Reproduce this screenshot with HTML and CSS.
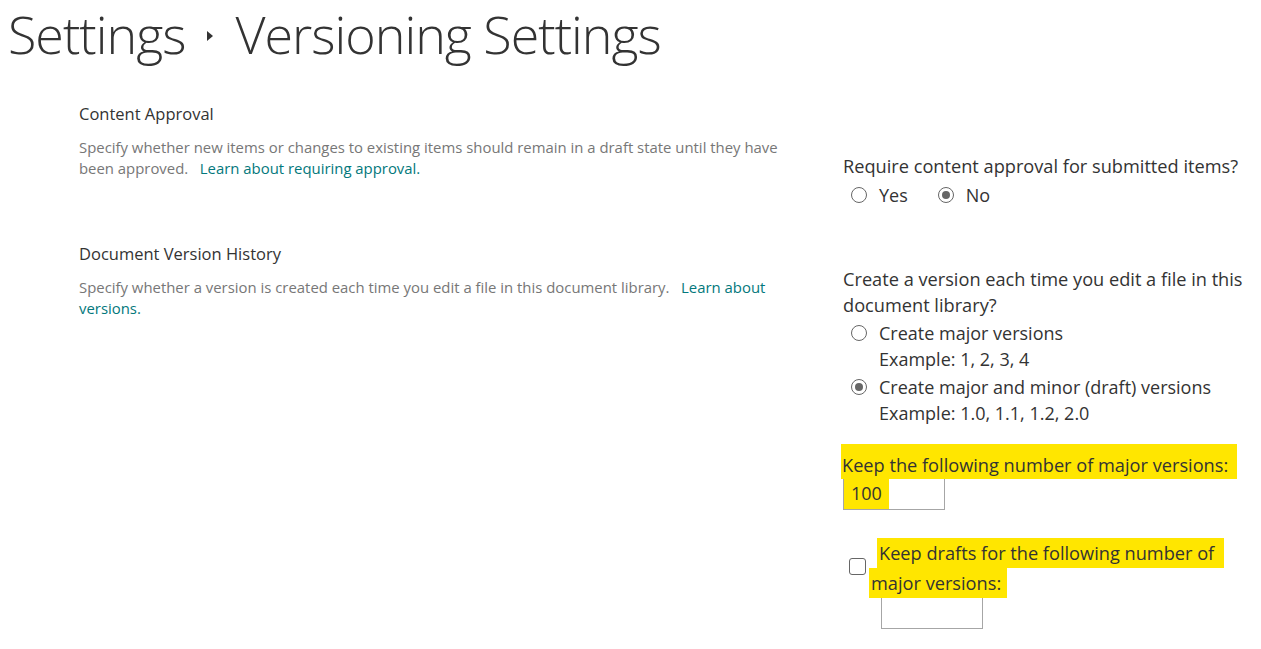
FILE: index.html
```html
<!DOCTYPE html>
<html lang="en">
<head>
  <meta charset="UTF-8" />
  <title>Versioning Settings</title>
  <link rel="stylesheet" href="styles.css">
</head>
<body>

  <!-- Page title -->
  <h1 class="page-title">
    <span>Settings</span>
    <span class="crumb-arrow"></span>
    <span>Versioning Settings</span>
  </h1>

  <!-- Content approval -->
  <section class="setting-row row-approval">
    <div class="setting-info">
      <h2>Content Approval</h2>
      <p>Specify whether new items or changes to existing items should remain in a draft state until they have been approved.&nbsp;&nbsp; <a href="#">Learn about requiring approval.</a></p>
    </div>
    <div class="setting-control">
      <div class="question">Require content approval for submitted items?</div>
      <div class="radio-inline">
        <label><input type="radio" name="approval"> Yes</label>
        <label><input type="radio" name="approval" checked> No</label>
      </div>
    </div>
  </section>

  <!-- Version history -->
  <section class="setting-row row-history">
    <div class="setting-info">
      <h2>Document Version History</h2>
      <p>Specify whether a version is created each time you edit a file in this document library.&nbsp;&nbsp; <a href="#">Learn about versions.</a></p>
    </div>
    <div class="setting-control">
      <div class="question">Create a version each time you edit a file in this document library?</div>
      <label class="radio-option">
        <input type="radio" name="versions">
        <span>Create major versions<br>Example: 1, 2, 3, 4</span>
      </label>
      <label class="radio-option">
        <input type="radio" name="versions" checked>
        <span>Create major and minor (draft) versions<br>Example: 1.0, 1.1, 1.2, 2.0</span>
      </label>

      <div class="limit-block">
        <div class="mark mark-major">Keep the following number of major versions:</div>
        <div class="num-box"><span class="mark">100</span></div>
      </div>

      <div class="drafts-block">
        <input type="checkbox" class="check">
        <div>
          <div class="mark mark-drafts">Keep drafts for the following number of</div>
          <div class="mark mark-drafts2">major versions:</div>
          <div class="num-box empty"></div>
        </div>
      </div>
    </div>
  </section>

</body>
</html>
```

FILE: styles.css
```css
* {
  margin: 0;
  padding: 0;
  box-sizing: border-box;
}

body {
  font-family: 'Open Sans', 'Noto Sans', sans-serif;
  color: #333;
  background: #fff;
  overflow: hidden;
}

/* Title */
.page-title {
  display: flex;
  align-items: center;
  gap: 22px;
  padding: 3px 0 0 8px;
  height: 64px;
  font-size: 52px;
  line-height: 61px;
  font-weight: 300;
  letter-spacing: -1px;
  color: #333;
}

.crumb-arrow {
  width: 0;
  height: 0;
  margin-top: 4px;
  border-top: 5px solid transparent;
  border-bottom: 5px solid transparent;
  border-left: 6px solid #333;
}

/* Rows */
.setting-row {
  display: grid;
  grid-template-columns: 705px 1fr;
  column-gap: 59px;
  padding-left: 79px;
}

.row-approval {
  margin-top: 38px;
}

.row-history {
  margin-top: 34px;
}

.setting-info h2 {
  font-size: 16.5px;
  font-weight: 400;
  color: #333;
  line-height: 24px;
}

.setting-info p {
  margin-top: 11px;
  font-size: 14.9px;
  line-height: 21px;
  color: #777;
}

.setting-info a {
  color: #03787c;
  text-decoration: none;
}

.row-approval .setting-control {
  padding-top: 51px;
}

.row-history .setting-control {
  padding-top: 24px;
}

.question {
  font-size: 18.2px;
  line-height: 26px;
  color: #333;
}

/* Radios */
input[type="radio"] {
  appearance: none;
  width: 16px;
  height: 16px;
  border: 1.5px solid #666;
  border-radius: 50%;
  background: #fff;
  flex-shrink: 0;
  display: grid;
  place-items: center;
}

input[type="radio"]:checked::after {
  content: "";
  width: 8px;
  height: 8px;
  border-radius: 50%;
  background: #666;
}

.radio-inline {
  display: flex;
  gap: 30px;
  padding-left: 8px;
  margin-top: 3px;
  font-size: 18px;
  line-height: 26px;
}

.radio-inline label,
.radio-option {
  display: flex;
  align-items: center;
  gap: 12px;
}

.radio-option {
  align-items: flex-start;
  padding-left: 8px;
  margin-top: 2px;
  font-size: 18px;
  line-height: 26px;
}

.radio-option input {
  margin-top: 5px;
}

/* Highlighted limits */
.mark {
  background: #ffe600;
}

.limit-block {
  margin-top: 18px;
}

.mark-major {
  display: inline-block;
  padding: 8px 9px 1px 1px;
  margin-left: -2px;
  font-size: 18.2px;
  line-height: 26px;
}

.num-box {
  width: 102px;
  height: 34px;
  margin-top: -3px;
  border: 1px solid #a6a6a6;
  font-size: 18px;
  line-height: 32px;
}

.num-box .mark {
  display: inline-block;
  padding: 0 7px;
}

.drafts-block {
  display: flex;
  align-items: flex-start;
  gap: 11px;
  margin-top: 28px;
  padding-left: 6px;
}

.check {
  appearance: none;
  width: 17px;
  height: 17px;
  margin-top: 20px;
  border: 1.5px solid #666;
  border-radius: 3px;
  background: #fff;
  flex-shrink: 0;
}

.mark-drafts,
.mark-drafts2 {
  display: inline-block;
  font-size: 18.2px;
  line-height: 30px;
}

.mark-drafts {
  padding: 0 10px 0 2px;
}

.mark-drafts2 {
  margin-left: -8px;
  padding: 0 6px 0 2px;
}

.num-box.empty {
  margin-top: -2px;
  margin-left: 4px;
  height: 33px;
}
```
